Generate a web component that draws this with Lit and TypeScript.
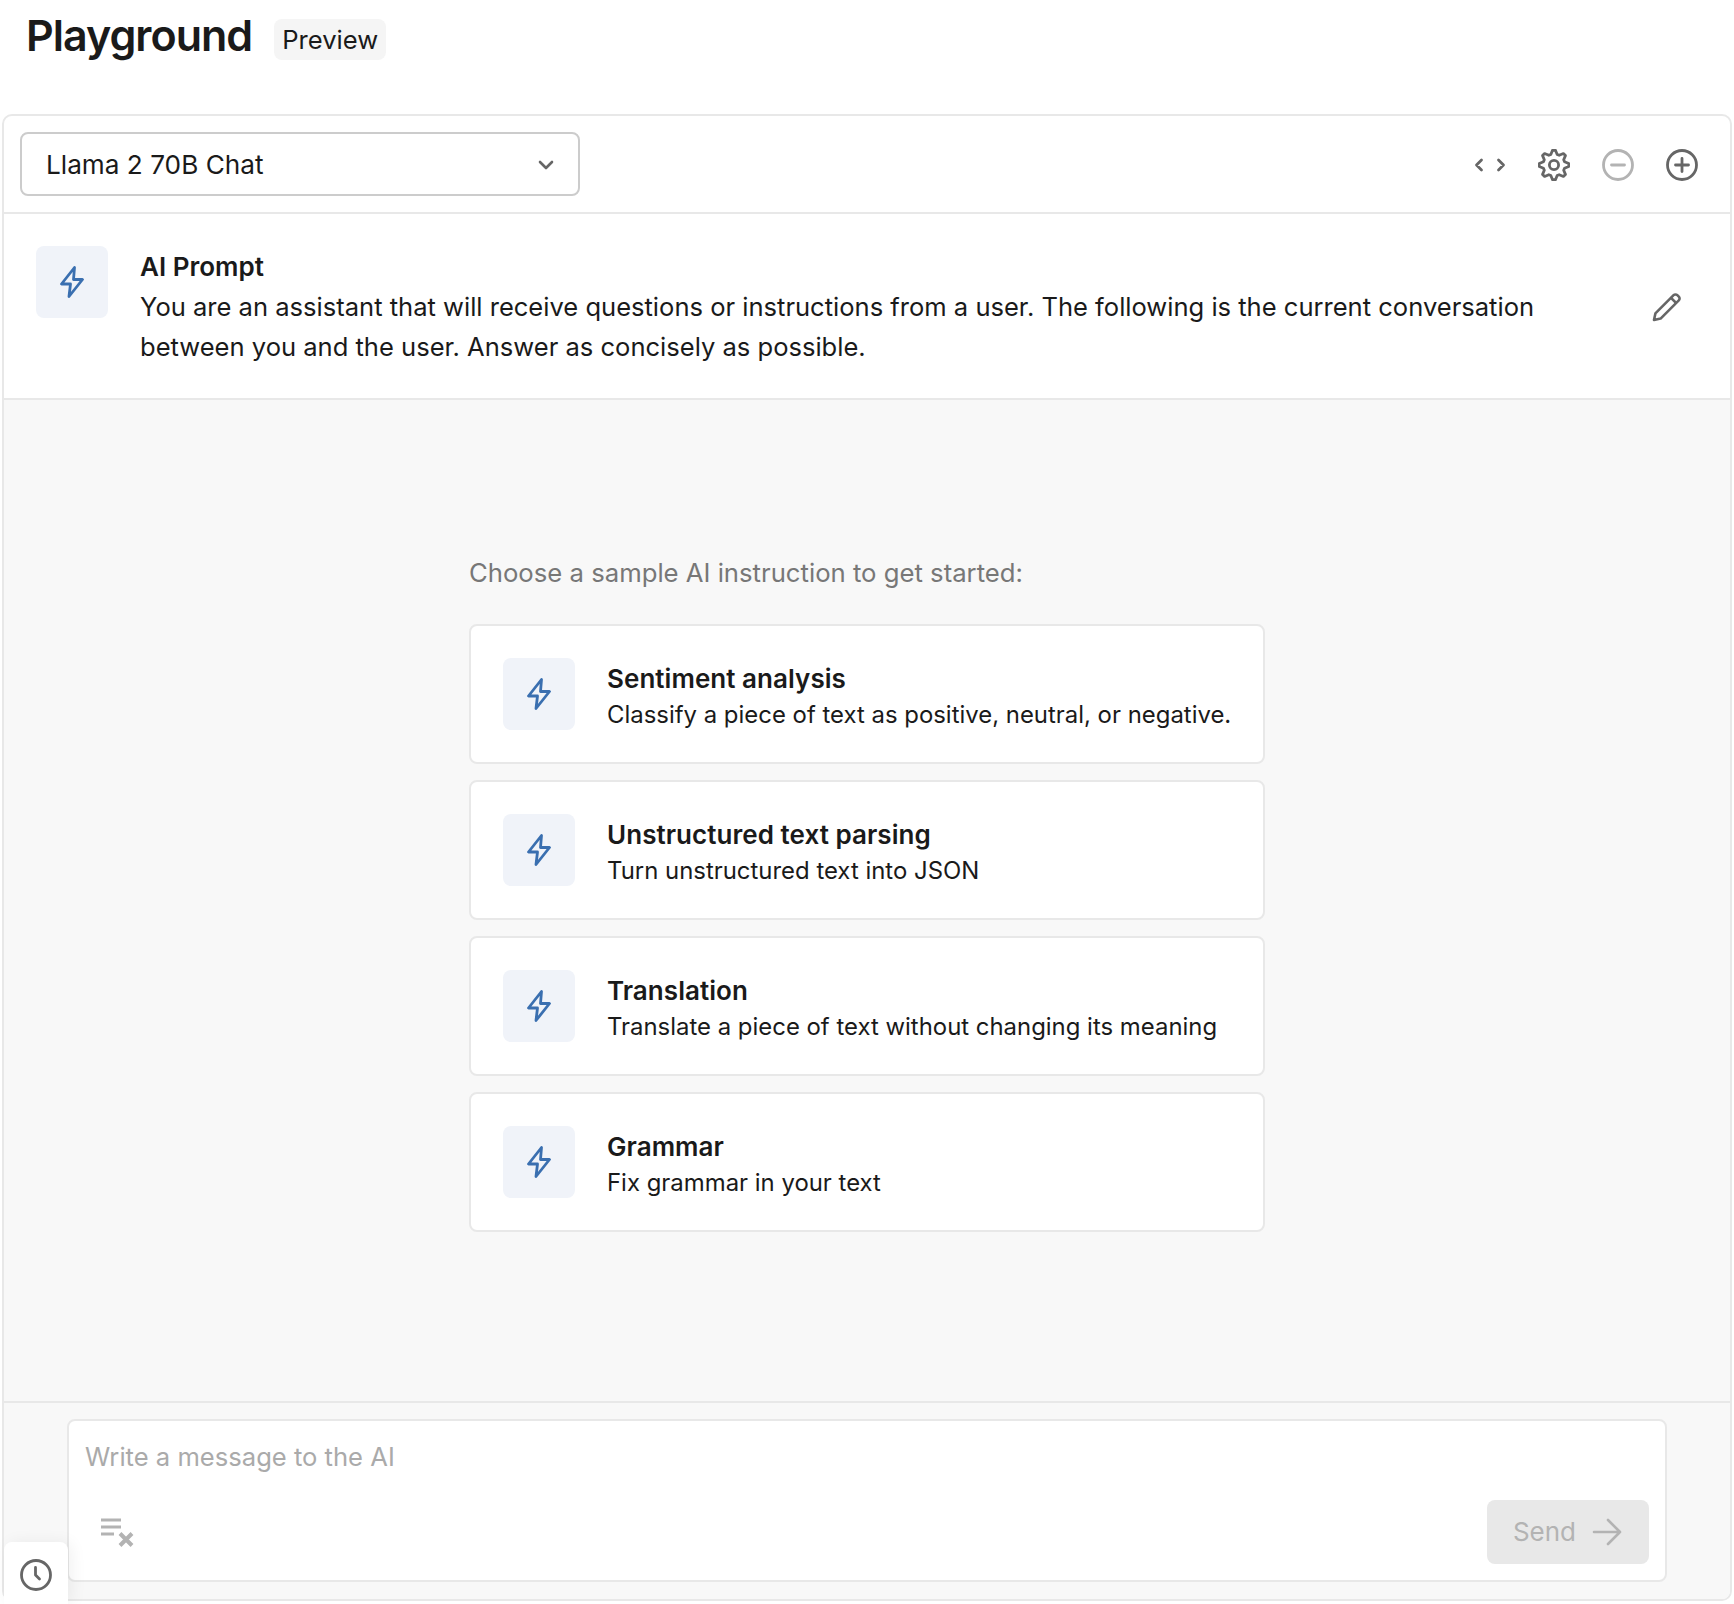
import { LitElement, html, css, svg } from 'lit';
import { customElement } from 'lit/decorators.js';

const samples = [
  { title: 'Sentiment analysis', text: 'Classify a piece of text as positive, neutral, or negative.' },
  { title: 'Unstructured text parsing', text: 'Turn unstructured text into JSON' },
  { title: 'Translation', text: 'Translate a piece of text without changing its meaning' },
  { title: 'Grammar', text: 'Fix grammar in your text' },
];

const bolt = html`<svg class="bolt" width="24" height="32" viewBox="0 0 24 32" fill="none" stroke="currentColor" stroke-width="2.8" stroke-linejoin="round">
  <path d="M14.5 1.5 1.5 18h9L9 30.5 22.5 13.5h-9z" />
</svg>`;

// 8 tooth gear, points computed around the centre
function gearPoints() {
  const pts: string[] = [];
  for (let i = 0; i < 32; i++) {
    const a = (i / 32) * Math.PI * 2 - Math.PI / 2 - (Math.PI * 2) / 64;
    const r = i % 4 === 0 || i % 4 === 1 ? 14.8 : 11;
    pts.push(`${(16 + r * Math.cos(a)).toFixed(2)},${(16 + r * Math.sin(a)).toFixed(2)}`);
  }
  return pts.join(' ');
}

const gear = html`<svg width="32" height="32" viewBox="0 0 32 32" fill="none" stroke="currentColor" stroke-width="2.8" stroke-linejoin="round">
  ${svg`<polygon points=${gearPoints()} /><circle cx="16" cy="16" r="4.6" />`}
</svg>`;

@customElement('app-root')
export class AppRoot extends LitElement {
  render() {
    return html`
      <header class="head">
        <h1>Playground</h1>
        <span class="badge">Preview</span>
      </header>
      <section class="panel">
        <div class="toolbar">
          <div class="select">
            <span>Llama 2 70B Chat</span>
            <svg width="16" height="10" viewBox="0 0 16 10" fill="none" stroke="#666" stroke-width="2.6" stroke-linecap="round" stroke-linejoin="round"><path d="M2 2l6 6 6-6" /></svg>
          </div>
          <div class="tools">
            <span class="tool">
              <svg width="32" height="32" viewBox="0 0 32 32" fill="none" stroke="currentColor" stroke-width="2.8" stroke-linecap="round" stroke-linejoin="round"><path d="M7.5 11 2.5 16l5 5M24.5 11l5 5-5 5" /></svg>
            </span>
            <span class="tool">${gear}</span>
            <span class="tool off">
              <svg width="32" height="32" viewBox="0 0 32 32" fill="none" stroke="currentColor" stroke-width="2.8" stroke-linecap="round"><circle cx="16" cy="16" r="14.5" /><path d="M9.5 16h13" /></svg>
            </span>
            <span class="tool">
              <svg width="32" height="32" viewBox="0 0 32 32" fill="none" stroke="currentColor" stroke-width="2.8" stroke-linecap="round"><circle cx="16" cy="16" r="14.5" /><path d="M9.5 16h13M16 9.5v13" /></svg>
            </span>
          </div>
        </div>
        <div class="prompt">
          <div class="tile">${bolt}</div>
          <div class="prompt-body">
            <div class="strong">AI Prompt</div>
            <p>You are an assistant that will receive questions or instructions from a user. The following is the current conversation between you and the user. Answer as concisely as possible.</p>
          </div>
          <svg class="pencil" width="30" height="30" viewBox="0 0 30 30" fill="none" stroke="currentColor" stroke-width="2.6" stroke-linejoin="round"><path d="M2 28l1.4-6.6L21.6 3.2a2.6 2.6 0 0 1 3.7 0l1.5 1.5a2.6 2.6 0 0 1 0 3.7L8.6 26.6z" /><path d="M19 5.8 24.2 11" /></svg>
        </div>
        <div class="chat">
          <div class="samples">
            <div class="hint">Choose a sample AI instruction to get started:</div>
            ${samples.map(
              (s) => html`
                <div class="card">
                  <div class="tile">${bolt}</div>
                  <div class="card-body">
                    <div class="strong">${s.title}</div>
                    <div class="card-text">${s.text}</div>
                  </div>
                </div>
              `
            )}
          </div>
        </div>
        <div class="composer">
          <div class="input">
            <div class="placeholder">Write a message to the AI</div>
            <div class="input-row">
              <svg class="clear" width="34" height="30" viewBox="0 0 34 30" fill="none" stroke="#b3b3b3" stroke-width="3.2"><path d="M1 3h20M1 10h20M1 17h13" /><path d="M20 16.5l12 12M32 16.5l-12 12" stroke-width="4" /></svg>
              <div class="send">
                <span>Send</span>
                <svg width="30" height="28" viewBox="0 0 30 28" fill="none" stroke="currentColor" stroke-width="2.6" stroke-linecap="round" stroke-linejoin="round"><path d="M2 14h26M16 2l12 12-12 12" /></svg>
              </div>
            </div>
          </div>
        </div>
      </section>
      <div class="history">
        <svg width="32" height="32" viewBox="0 0 32 32" fill="none" stroke="#666" stroke-width="2.8" stroke-linecap="round" stroke-linejoin="round"><circle cx="16" cy="16" r="14.5" /><path d="M15.5 8.5V16l4 4" /></svg>
      </div>
    `;
  }

  static styles = css`
    :host {
      display: block;
      position: relative;
      height: 1604px;
      overflow: hidden;
      background: #fff;
      color: #1a1a1a;
      font-family: Inter, 'Noto Sans', sans-serif;
      font-size: 26px;
      line-height: 40px;
    }

    * {
      box-sizing: border-box;
    }

    .head {
      display: flex;
      align-items: center;
      gap: 22px;
      height: 114px;
      padding: 0 0 44px 26px;
    }

    h1 {
      margin: 0;
      font-size: 43px;
      font-weight: 600;
      line-height: 48px;
      letter-spacing: -1px;
    }

    .badge {
      display: flex;
      align-items: center;
      height: 41px;
      padding: 1px 8px 0;
      margin-top: 9px;
      border-radius: 8px;
      background: #f5f5f5;
      font-size: 25.6px;
    }

    .panel {
      display: flex;
      flex-direction: column;
      height: 1487px;
      margin: 0 2px;
      border: 2px solid #e8e8e8;
      border-radius: 10px;
      overflow: hidden;
    }

    .toolbar {
      display: flex;
      align-items: center;
      justify-content: space-between;
      flex: none;
      height: 98px;
      padding: 0 32px 0 16px;
      border-bottom: 2px solid #e8e8e8;
    }

    .select {
      display: flex;
      align-items: center;
      justify-content: space-between;
      width: 560px;
      height: 64px;
      padding: 2px 24px 0;
      border: 2px solid #ccc;
      border-radius: 8px;
      font-size: 26.2px;
    }

    .tools {
      display: flex;
      gap: 32px;
      padding-top: 2px;
      color: #666;
    }

    .tool {
      display: flex;
    }

    .tool.off {
      color: #b3b3b3;
    }

    .prompt {
      display: flex;
      align-items: flex-start;
      flex: none;
      height: 186px;
      padding: 32px 48px 0 32px;
      border-bottom: 2px solid #e8e8e8;
    }

    .tile {
      display: flex;
      align-items: center;
      justify-content: center;
      flex: none;
      width: 72px;
      height: 72px;
      border-radius: 8px;
      background: #f0f3f9;
      color: #3a6fb0;
    }

    .prompt-body {
      flex: 1;
      margin-left: 32px;
      padding-top: 1px;
      padding-right: 100px;
    }

    .prompt p {
      margin: 0;
      font-size: 25.55px;
    }

    .strong {
      font-weight: 600;
    }

    .pencil {
      flex: none;
      margin-top: 46px;
      color: #666;
    }

    .chat {
      flex: 1;
      display: flex;
      justify-content: center;
      background: #f8f8f8;
    }

    .samples {
      width: 796px;
      padding-top: 153px;
    }

    .hint {
      margin-bottom: 31px;
      color: #777;
      font-size: 25.7px;
    }

    .card {
      display: flex;
      align-items: center;
      gap: 32px;
      height: 140px;
      margin-bottom: 16px;
      padding: 0 32px;
      border: 2px solid #e8e8e8;
      border-radius: 8px;
      background: #fff;
    }

    .card-body {
      padding-top: 5px;
    }

    .card .strong {
      line-height: 35.5px;
      letter-spacing: 0.05px;
    }

    .card-text {
      font-size: 23.92px;
      line-height: 35.5px;
      white-space: nowrap;
    }

    .composer {
      flex: none;
      height: 198px;
      padding: 16px 63px 0;
      border-top: 2px solid #e8e8e8;
      background: #f8f8f8;
    }

    .input {
      height: 163px;
      padding: 16px 16px 0;
      border: 2px solid #e8e8e8;
      border-radius: 8px;
      background: #fff;
    }

    .placeholder {
      color: #aaa;
      font-size: 25.6px;
    }

    .input-row {
      display: flex;
      align-items: center;
      justify-content: space-between;
      margin-top: 23px;
      padding-left: 15px;
    }

    .send {
      display: flex;
      align-items: center;
      gap: 16px;
      height: 64px;
      padding: 0 27px 0 26px;
      border-radius: 8px;
      background: #e8e8e8;
      color: #b3b3b3;
    }

    .history {
      position: absolute;
      left: 4px;
      bottom: 0;
      display: flex;
      align-items: center;
      justify-content: center;
      width: 64px;
      height: 62px;
      padding-top: 4px;
      border-radius: 8px 8px 0 0;
      background: #fff;
      box-shadow: 4px 0 16px rgba(0, 0, 0, 0.06);
    }
  `;
}
